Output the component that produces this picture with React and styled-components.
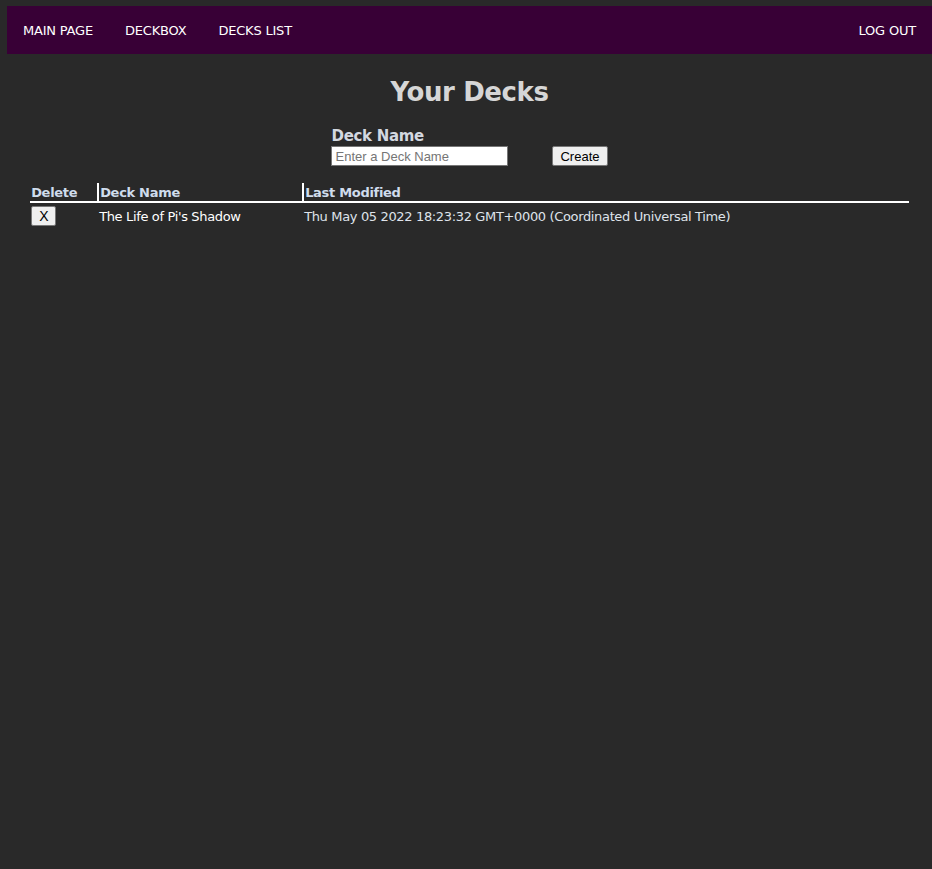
import React from "react";
import styled, { createGlobalStyle } from "styled-components";

const Global = createGlobalStyle`
  html, body { margin: 0; padding: 0; background: #292929; }
  body { font-family: "DejaVu Sans", Verdana, sans-serif; }
`;

const Page = styled.div`
  min-height: 869px;
  box-sizing: border-box;
  padding: 6px 0 0 7px;
  background: #292929;
`;

const Nav = styled.nav`
  display: flex;
  align-items: center;
  height: 48px;
  background: #380036;
`;

const NavLink = styled.a`
  padding: 0 16px;
  color: #ffffff;
  font-size: 13px;
  text-decoration: none;
  margin-left: ${(p) => (p.$push ? "auto" : "0")};
  letter-spacing: -0.2px;
`;

const Main = styled.main`
  display: flex;
  flex-direction: column;
  align-items: center;
`;

const Title = styled.h1`
  margin: 23px 0 20px;
  font-size: 26px;
  font-weight: bold;
  color: #d6d6d6;
  letter-spacing: -0.4px;
`;

const Form = styled.form`
  display: flex;
  align-items: flex-end;
  gap: 44px;
`;

const Field = styled.label`
  display: flex;
  flex-direction: column;
  font-size: 15px;
  font-weight: bold;
  color: #d3d8e0;
  letter-spacing: -0.3px;
`;

const Input = styled.input`
  width: 177px;
  height: 20px;
  box-sizing: border-box;
  margin-top: 1px;
  border: 1px solid #767676;
  padding: 1px 3px;
  font-family: "Liberation Sans", Arial, sans-serif;
  font-size: 13px;
  background: #fff;
  &::placeholder { color: #757575; }
`;

const Button = styled.button`
  height: 20px;
  padding: 0 7px;
  font-family: "Liberation Sans", Arial, sans-serif;
  font-size: 13px;
  color: #000;
  background: #efefef;
  border: 1px solid #767676;
  border-radius: 2px;
`;

const Table = styled.table`
  width: 95%;
  margin-top: 17px;
  border-collapse: collapse;
  table-layout: fixed;
`;

const Th = styled.th`
  box-sizing: border-box;
  text-align: left;
  padding: 2px 1px 1px;
  font-size: 13px;
  font-weight: bold;
  color: #cfdcec;
  border-bottom: 2px solid #ffffff;
  border-left: ${(p) => (p.$sep ? "2px solid #ffffff" : "none")};
  width: ${(p) => p.$w || "auto"};
  letter-spacing: -0.3px;
`;

const Td = styled.td`
  padding: 3px 1px 0;
  font-size: 13px;
  color: ${(p) => (p.$dim ? "#dfe3ea" : "#ffffff")};
  letter-spacing: -0.35px;
  vertical-align: middle;
`;

const SmallButton = styled(Button)`
  padding: 0 7px;
  height: 20px;
  font-size: 14px;
`;

export default function App() {
  return (
    <>
      <Global />
      <Page>
        <Nav>
          <NavLink href="#">MAIN PAGE</NavLink>
          <NavLink href="#">DECKBOX</NavLink>
          <NavLink href="#">DECKS LIST</NavLink>
          <NavLink href="#" $push>LOG OUT</NavLink>
        </Nav>
        <Main>
          <Title>Your Decks</Title>
          <Form onSubmit={(e) => e.preventDefault()}>
            <Field>
              Deck Name
              <Input placeholder="Enter a Deck Name" />
            </Field>
            <Button type="submit">Create</Button>
          </Form>
          <Table>
            <thead>
              <tr>
                <Th $w="68px">Delete</Th>
                <Th $sep $w="205px">Deck Name</Th>
                <Th $sep>Last Modified</Th>
              </tr>
            </thead>
            <tbody>
              <tr>
                <Td><SmallButton>X</SmallButton></Td>
                <Td>The Life of Pi's Shadow</Td>
                <Td $dim>Thu May 05 2022 18:23:32 GMT+0000 (Coordinated Universal Time)</Td>
              </tr>
            </tbody>
          </Table>
        </Main>
      </Page>
    </>
  );
}
